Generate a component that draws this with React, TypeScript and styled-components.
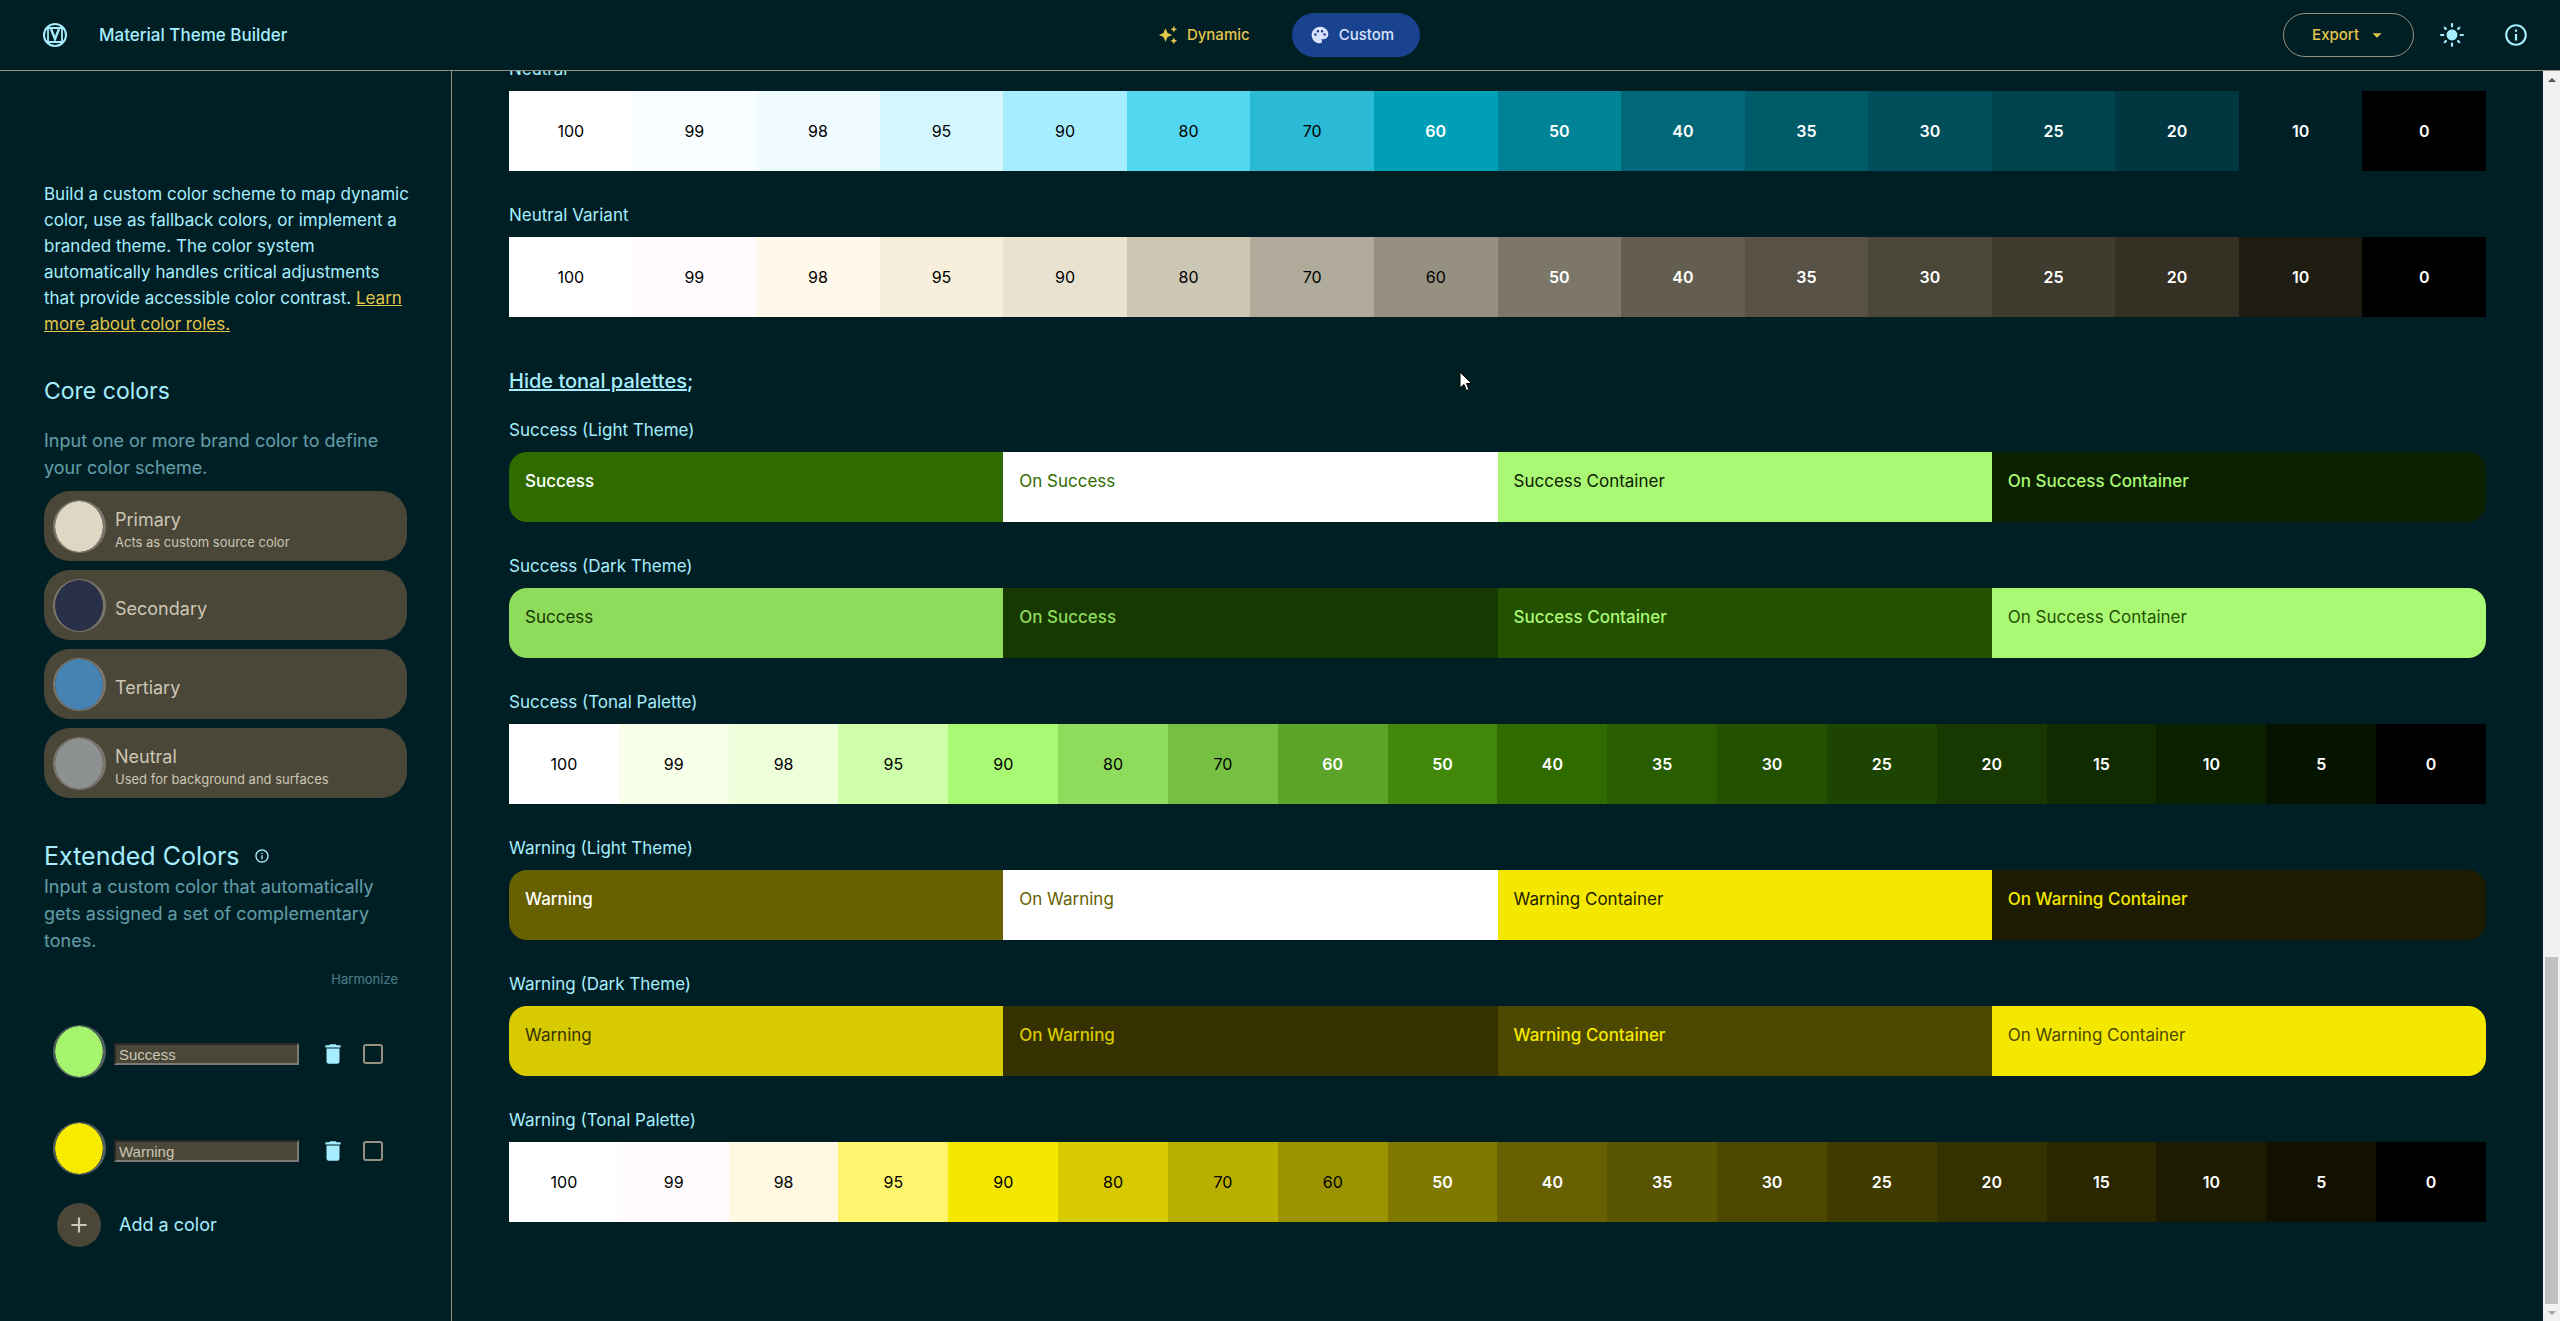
import React, { useState } from 'react';
import styled, { createGlobalStyle } from 'styled-components';
import {
  MdAdd,
  MdArrowDropDown,
  MdAutoAwesome,
  MdDelete,
  MdInfoOutline,
  MdLightMode,
  MdPalette,
} from 'react-icons/md';

const color = {
  background: '#001f24',
  text: '#a6eeff',
  accent: '#e2c54b',
  outline: '#969080',
  surfaceVariant: '#4a4739',
  onSurfaceVariant: '#ccc6b5',
  tab: '#19438f',
  onTab: '#d9e2ff',
};

const GlobalStyle = createGlobalStyle`
  *, *::before, *::after { box-sizing: border-box; }
  body {
    margin: 0;
    background: ${color.background};
    color: ${color.text};
    font-family: Inter, Roboto, sans-serif;
    font-size: 17px;
    line-height: 26px;
  }
  h1, h2, h3, p { margin: 0; font-weight: 400; }
  button, input { font: inherit; }
  button { cursor: pointer; }
`;

/* ---------- shell ---------- */

const Shell = styled.div`
  display: grid;
  grid-template: auto minmax(0, 1fr) / 452px minmax(0, 1fr);
  height: 100vh;
`;

const Header = styled.header`
  grid-column: 1 / -1;
  display: grid;
  grid-template-columns: 1fr auto 1fr;
  align-items: center;
  padding: 13px 18px;
  border-bottom: 1px solid ${color.outline};
`;

const Brand = styled.div`
  display: flex;
  align-items: center;
  gap: 32px;
  padding-left: 25px;

  h1 { font-size: 17px; line-height: 26px; font-weight: 500; }
`;

const Tabs = styled.nav`
  display: flex;
  gap: 16px;
`;

const Tab = styled.button<{ $active?: boolean }>`
  display: flex;
  align-items: center;
  gap: 9px;
  height: 44px;
  padding: 0 26px 0 18px;
  border: 0;
  border-radius: 22px;
  background: ${(p) => (p.$active ? color.tab : 'transparent')};
  color: ${(p) => (p.$active ? color.onTab : color.accent)};
  font-size: 15px;
  font-weight: 500;
`;

const Actions = styled.div`
  display: flex;
  align-items: center;
  justify-content: flex-end;
  gap: 12px;
`;

const ExportButton = styled.button`
  display: flex;
  align-items: center;
  gap: 7px;
  height: 44px;
  padding: 0 25px 0 28px;
  border: 1px solid ${color.outline};
  border-radius: 22px;
  background: transparent;
  color: ${color.accent};
  font-size: 15px;
  font-weight: 500;
`;

const IconButton = styled.button<{ $size?: number }>`
  display: flex;
  align-items: center;
  justify-content: center;
  width: ${(p) => p.$size ?? 52}px;
  height: ${(p) => p.$size ?? 52}px;
  margin: ${(p) => (p.$size ? 0 : -4)}px 0;
  padding: 0;
  border: 0;
  background: transparent;
  color: ${color.text};
`;

/* ---------- sidebar ---------- */

const Sidebar = styled.aside`
  padding: 110px 44px 40px;
  border-right: 1px solid ${color.outline};
  overflow: hidden;
`;

const Intro = styled.p`
  margin-right: -4px;
`;

const LearnLink = styled.a`
  color: ${color.accent};
`;

const SectionTitle = styled.h2<{ $large?: boolean }>`
  display: flex;
  align-items: center;
  gap: 14px;
  margin-top: ${(p) => (p.$large ? 41 : 38)}px;
  font-size: ${(p) => (p.$large ? 25 : 23)}px;
  line-height: ${(p) => (p.$large ? 34 : 32)}px;
`;

const Hint = styled.p<{ $spaced?: boolean }>`
  margin: ${(p) => (p.$spaced ? '20px 0 10px' : '0')};
  font-size: 18px;
  line-height: 27px;
  opacity: 0.6;
`;

const CoreList = styled.div`
  display: flex;
  flex-direction: column;
  gap: 9px;
`;

const CoreCard = styled.label`
  display: flex;
  align-items: center;
  gap: 9px;
  height: 70px;
  padding: 0 9px;
  border-radius: 26px;
  background: ${color.surfaceVariant};
  color: ${color.onSurfaceVariant};
  cursor: pointer;
`;

const Swatch = styled.input.attrs({ type: 'color' })`
  appearance: none;
  flex: none;
  width: 53px;
  height: 53px;
  padding: 0;
  border: solid rgba(186, 178, 172, 0.45);
  border-width: 1px 3px 1px 2px;
  border-radius: 50%;
  background: transparent;
  overflow: hidden;
  cursor: pointer;

  &::-webkit-color-swatch-wrapper { padding: 0; }
  &::-webkit-color-swatch { border: 0; border-radius: 50%; }
`;

const CardText = styled.span`
  display: flex;
  flex-direction: column;
  padding-top: 8px;
`;

const CardName = styled.span`
  font-size: 18px;
  line-height: 24px;
`;

const CardNote = styled.span`
  font-size: 13px;
  line-height: 20px;
`;

const HarmonizeLabel = styled.div`
  margin: 15px 9px 27px;
  text-align: right;
  font-size: 13px;
  line-height: 20px;
  opacity: 0.45;
`;

const ExtendedList = styled.div`
  display: flex;
  flex-direction: column;
  gap: 27px;
  margin-bottom: 20px;
`;

const ExtendedRow = styled.div`
  display: flex;
  align-items: center;
  gap: 8px;
  height: 70px;
  padding: 0 24px 0 9px;
`;

const ExtendedFields = styled.div`
  display: flex;
  flex: 1;
  min-width: 0;
  align-items: center;
  padding-top: 6px;
`;

const NameInput = styled.input`
  flex: 1;
  min-width: 0;
  height: 22px;
  margin-right: 21px;
  padding: 1px 3px;
  border: 2px solid;
  border-color: #2c2827 #7c7b7a #7c7b7a #2c2827;
  border-radius: 0;
  background: ${color.surfaceVariant};
  color: ${color.onSurfaceVariant};
  font: 15px "Liberation Sans", Arial, sans-serif;
`;

const Check = styled.input.attrs({ type: 'checkbox' })`
  appearance: none;
  flex: none;
  width: 20px;
  height: 20px;
  margin: 0 0 0 17px;
  border: 2px solid ${color.outline};
  border-radius: 3px;
  cursor: pointer;

  &:checked { background: ${color.text}; }
`;

const AddButton = styled.button`
  display: flex;
  align-items: center;
  gap: 18px;
  margin-left: 13px;
  padding: 0;
  border: 0;
  background: transparent;
  color: ${color.text};
  font-size: 18px;
`;

const AddIcon = styled.span`
  display: grid;
  place-items: center;
  width: 44px;
  height: 44px;
  border-radius: 50%;
  background: ${color.surfaceVariant};
  color: ${color.onSurfaceVariant};
`;

/* ---------- main ---------- */

const Viewport = styled.div`
  display: flex;
  min-height: 0;
`;

/* Pinned to the end of its content, as after scrolling to the bottom. */
const Main = styled.main`
  flex: 1;
  min-width: 0;
  display: flex;
  flex-direction: column;
  justify-content: flex-end;
  padding: 0 57px 99px;
  overflow: hidden;
`;

const Palette = styled.section`
  flex: none;
  & + & { margin-top: 32px; }
`;

const PaletteLabel = styled.h3`
  margin-bottom: 10px;
  font-size: 17px;
  line-height: 24px;
`;

const ToneRow = styled.div`
  display: flex;
  height: 80px;
`;

const Tone = styled.div<{ $bg: string; $dark: boolean }>`
  flex: 1;
  display: flex;
  align-items: center;
  justify-content: center;
  background: ${(p) => p.$bg};
  color: ${(p) => (p.$dark ? '#000' : '#fff')};
  font-size: 16px;
  font-weight: ${(p) => (p.$dark ? 400 : 600)};
`;

const RoleRow = styled.div`
  display: flex;
  height: 70px;
  border-radius: 18px;
  overflow: hidden;
`;

const Role = styled.div<{ $bg: string; $fg: string; $strong: boolean }>`
  flex: 1;
  padding: 16px;
  background: ${(p) => p.$bg};
  color: ${(p) => p.$fg};
  font-weight: ${(p) => (p.$strong ? 500 : 400)};
  line-height: 26px;
`;

const ToggleHeading = styled.h2`
  flex: none;
  margin: 50px 0 23px;
  font-size: 20px;
  line-height: 28px;
  font-weight: 500;

  a { color: inherit; }
`;

/* ---------- scrollbar ---------- */

const Scrollbar = styled.div`
  display: flex;
  flex-direction: column;
  width: 17px;
  background: #f1f1f1;
`;

const ScrollArrow = styled.span<{ $down?: boolean }>`
  display: grid;
  place-items: center;
  height: 17px;

  &::before {
    content: '';
    border: 4px solid transparent;
    border-top: ${(p) => (p.$down ? '4px solid #a3a3a3' : '0')};
    border-bottom: ${(p) => (p.$down ? '0' : '4px solid #505050')};
  }
`;

const ScrollTrack = styled.div`
  flex: 1;
  display: flex;
  flex-direction: column;
  justify-content: flex-end;
  padding: 0 2px;
`;

const ScrollThumb = styled.div`
  height: 28.5%;
  background: #c1c1c1;
`;

const Pointer = styled.svg`
  position: fixed;
  left: 1459px;
  top: 371px;
  pointer-events: none;
`;

/* ---------- data ---------- */

type ToneEntry = [tone: number, hex: string];
type Hues = Record<number, string>;

const neutral: ToneEntry[] = [
  [100, '#ffffff'], [99, '#f8fdff'], [98, '#effbff'], [95, '#d4f7ff'],
  [90, '#a6eeff'], [80, '#53d7f1'], [70, '#2bbad5'], [60, '#009fb8'],
  [50, '#008396'], [40, '#006878'], [35, '#005b69'], [30, '#004e5a'],
  [25, '#00424d'], [20, '#00363f'], [10, '#001f24'], [0, '#000000'],
];

const neutralVariant: ToneEntry[] = [
  [100, '#ffffff'], [99, '#fffbff'], [98, '#fff9eb'], [95, '#f7efdc'],
  [90, '#e9e2d0'], [80, '#ccc6b5'], [70, '#b0aa9a'], [60, '#969080'],
  [50, '#7c7768'], [40, '#635e50'], [35, '#575245'], [30, '#4a4739'],
  [25, '#3f3b2e'], [20, '#343024'], [10, '#1e1b10'], [0, '#000000'],
];

const success: ToneEntry[] = [
  [100, '#ffffff'], [99, '#f8ffe9'], [98, '#edffdb'], [95, '#cfffaa'],
  [90, '#aaf974'], [80, '#8fdb5b'], [70, '#75bf43'], [60, '#5ba329'],
  [50, '#41880b'], [40, '#306b00'], [35, '#295e00'], [30, '#235100'],
  [25, '#1d4400'], [20, '#173800'], [15, '#112b00'], [10, '#0a2000'],
  [5, '#051400'], [0, '#000000'],
];

const warning: ToneEntry[] = [
  [100, '#ffffff'], [99, '#fffbff'], [98, '#fff9e1'], [95, '#fff46e'],
  [90, '#f5e800'], [80, '#d7ca00'], [70, '#b9af00'], [60, '#9b9300'],
  [50, '#807900'], [40, '#666000'], [35, '#595400'], [30, '#4c4800'],
  [25, '#403c00'], [20, '#353100'], [15, '#292600'], [10, '#1e1c00'],
  [5, '#121100'], [0, '#000000'],
];

const coreColors = [
  { name: 'Primary', note: 'Acts as custom source color', value: '#dfd7c4' },
  { name: 'Secondary', value: '#28304a' },
  { name: 'Tertiary', value: '#4682b4' },
  { name: 'Neutral', note: 'Used for background and surfaces', value: '#8e9192' },
];

const extendedColors = [
  { name: 'Success', value: '#a6f36e', tones: success, darkFrom: 70 },
  { name: 'Warning', value: '#f9eb00', tones: warning, darkFrom: 60 },
];

/* ---------- parts ---------- */

function TonalPalette({ label, tones, darkFrom }: { label: string; tones: ToneEntry[]; darkFrom: number }) {
  return (
    <Palette>
      <PaletteLabel>{label}</PaletteLabel>
      <ToneRow>
        {tones.map(([tone, hex]) => (
          <Tone key={tone} $bg={hex} $dark={tone >= darkFrom}>{tone}</Tone>
        ))}
      </ToneRow>
    </Palette>
  );
}

function RolePalette({ name, theme, tones }: { name: string; theme: 'Light' | 'Dark'; tones: ToneEntry[] }) {
  const t: Hues = Object.fromEntries(tones);
  const pairs = theme === 'Light'
    ? [[40, 100], [100, 40], [90, 10], [10, 90]]
    : [[80, 20], [20, 80], [30, 90], [90, 30]];
  const labels = [name, `On ${name}`, `${name} Container`, `On ${name} Container`];
  return (
    <Palette>
      <PaletteLabel>{`${name} (${theme} Theme)`}</PaletteLabel>
      <RoleRow>
        {labels.map((label, i) => {
          const [bg, fg] = pairs[i];
          return <Role key={label} $bg={t[bg]} $fg={t[fg]} $strong={fg > bg}>{label}</Role>;
        })}
      </RoleRow>
    </Palette>
  );
}

function Logo() {
  return (
    <svg width="24" height="24" viewBox="0 0 24 24" fill="none" stroke="currentColor" aria-hidden="true">
      <circle cx="12" cy="12" r="11" strokeWidth="2" />
      <path d="M5 5H19V19H5Z" strokeWidth="1.800" />
      <path d="M8 6 12 16 16 6" strokeWidth="2.400" />
    </svg>
  );
}

function CoreColor({ name, note, value }: { name: string; note?: string; value: string }) {
  const [picked, setPicked] = useState(value);
  return (
    <CoreCard>
      <Swatch value={picked} onChange={(e) => setPicked(e.target.value)} />
      <CardText>
        <CardName>{name}</CardName>
        {note && <CardNote>{note}</CardNote>}
      </CardText>
    </CoreCard>
  );
}

function ExtendedColor({ name, value }: { name: string; value: string }) {
  const [picked, setPicked] = useState(value);
  return (
    <ExtendedRow>
      <Swatch aria-label={`${name} color`} value={picked} onChange={(e) => setPicked(e.target.value)} />
      <ExtendedFields>
        <NameInput aria-label="Color name" defaultValue={name} />
        <IconButton $size={26} aria-label={`Delete ${name}`}><MdDelete size={26} /></IconButton>
        <Check aria-label={`Harmonize ${name}`} />
      </ExtendedFields>
    </ExtendedRow>
  );
}

export default function App() {
  return (
    <>
      <GlobalStyle />
      <Shell>
        <Header>
          <Brand>
            <Logo />
            <h1>Material Theme Builder</h1>
          </Brand>
          <Tabs>
            <Tab><MdAutoAwesome size={20} />Dynamic</Tab>
            <Tab $active><MdPalette size={20} />Custom</Tab>
          </Tabs>
          <Actions>
            <ExportButton>Export<MdArrowDropDown size={22} /></ExportButton>
            <IconButton aria-label="Light mode"><MdLightMode size={26} /></IconButton>
            <IconButton aria-label="About"><MdInfoOutline size={26} /></IconButton>
          </Actions>
        </Header>

        <Sidebar>
          <Intro>
            Build a custom color scheme to map dynamic color, use as fallback colors, or implement a
            branded theme. The color system automatically handles critical adjustments that provide
            accessible color contrast. <LearnLink href="#roles">Learn more about color roles.</LearnLink>
          </Intro>

          <SectionTitle>Core colors</SectionTitle>
          <Hint $spaced>Input one or more brand color to define your color scheme.</Hint>
          <CoreList>
            {coreColors.map((c) => <CoreColor key={c.name} {...c} />)}
          </CoreList>

          <SectionTitle $large>Extended Colors <MdInfoOutline size={16} /></SectionTitle>
          <Hint>Input a custom color that automatically gets assigned a set of complementary tones.</Hint>
          <HarmonizeLabel>Harmonize</HarmonizeLabel>
          <ExtendedList>
            {extendedColors.map((c) => <ExtendedColor key={c.name} name={c.name} value={c.value} />)}
          </ExtendedList>
          <AddButton><AddIcon><MdAdd size={26} /></AddIcon>Add a color</AddButton>
        </Sidebar>

        <Viewport>
          <Main>
            <TonalPalette label="Neutral" tones={neutral} darkFrom={70} />
            <TonalPalette label="Neutral Variant" tones={neutralVariant} darkFrom={60} />
            <ToggleHeading><a href="#palettes">Hide tonal palettes</a>;</ToggleHeading>
            {extendedColors.map(({ name, tones, darkFrom }) => (
              <React.Fragment key={name}>
                <RolePalette name={name} theme="Light" tones={tones} />
                <RolePalette name={name} theme="Dark" tones={tones} />
                <TonalPalette label={`${name} (Tonal Palette)`} tones={tones} darkFrom={darkFrom} />
              </React.Fragment>
            ))}
          </Main>
          <Scrollbar aria-hidden="true">
            <ScrollArrow />
            <ScrollTrack><ScrollThumb /></ScrollTrack>
            <ScrollArrow $down />
          </Scrollbar>
        </Viewport>
      </Shell>
      <Pointer width="14" height="21" viewBox="0 0 14 21" aria-hidden="true">
        <path d="M1 1v16l4-3.500 2.500 6 2.500-1-2.500-6H12.500z" fill="#fff" stroke="#000" />
      </Pointer>
    </>
  );
}
